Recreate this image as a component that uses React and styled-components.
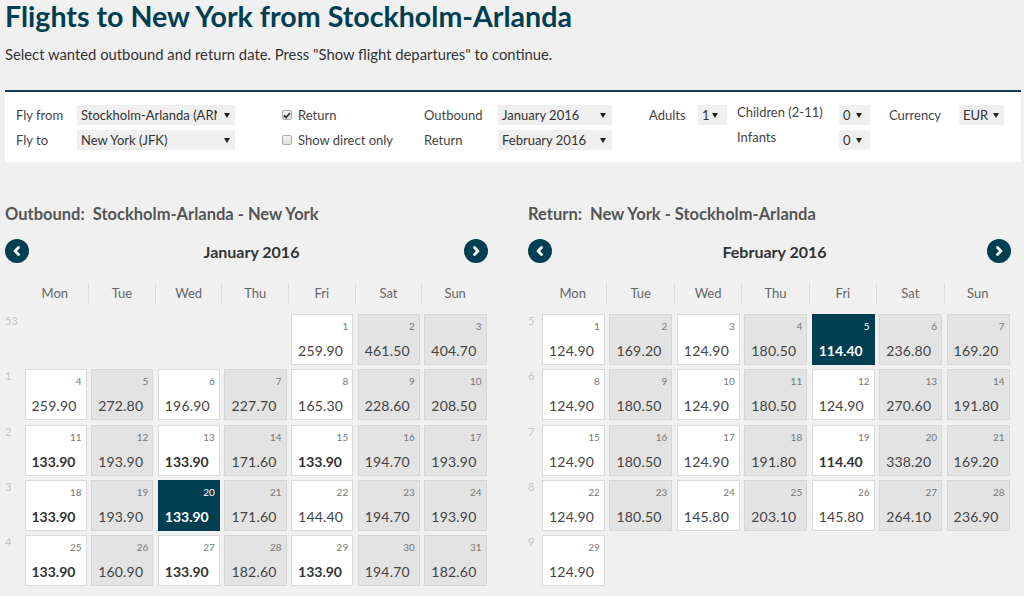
import React from 'react';
import styled, { createGlobalStyle } from 'styled-components';

const FONT = `Lato, "Open Sans", sans-serif`;
const TEAL = '#003f51';

const Global = createGlobalStyle`
  html, body { margin: 0; padding: 0; background: #f0f0f0; }
  body { font-family: ${FONT}; color: #333; }
  * { box-sizing: border-box; }
`;

const Page = styled.div`
  width: 1024px;
  padding: 0 5px;
`;

const Title = styled.h1`
  margin: 0;
  font-size: 28.6px;
  line-height: 33px;
  font-weight: 700;
  color: ${TEAL};
`;

const Subtitle = styled.p`
  margin: 11px 0 0;
  font-size: 14.8px;
  line-height: 20px;
  color: #333;
`;

const Panel = styled.div`
  margin-top: 26px;
  width: 1016px;
  background: #fff;
  border-top: 2px solid #0d3f4e;
  padding: 13px 0 12px 11px;
  display: flex;
`;

const Group = styled.div`
  display: grid;
  grid-template-columns: ${(p) => p.$cols};
  grid-auto-rows: 20px;
  row-gap: 5px;
  margin-left: ${(p) => p.$ml || 0}px;
  align-items: center;
`;

const Label = styled.span`
  font-size: 13px;
  line-height: 20px;
  color: #444;
  white-space: nowrap;
  ${(p) => p.$raise && 'position: relative; top: -3px;'}
`;

const Select = styled.div`
  position: relative;
  height: 20px;
  background: #efefef;
  font-size: 13px;
  line-height: 20px;
  color: #333;
  padding: 0 ${(p) => p.$pr || 14}px 0 4px;
`;

const SelectText = styled.div`
  white-space: nowrap;
  overflow: hidden;
`;

const Arrow = styled.span`
  position: absolute;
  right: ${(p) => p.$r || 6}px;
  top: 8px;
  border-left: 3px solid transparent;
  border-right: 3px solid transparent;
  border-top: 5px solid #222;
`;

const CheckRow = styled.label`
  display: flex;
  align-items: center;
  gap: 6px;
  font-size: 13px;
  line-height: 20px;
  color: #444;
`;

const Box = styled.span`
  width: 10px;
  height: 10px;
  border: 1px solid #a9a9a9;
  border-radius: 2px;
  background: linear-gradient(#f4f4f4, #dedede);
  display: flex;
  align-items: center;
  justify-content: center;
`;

const Calendars = styled.div`
  display: flex;
  gap: 40px;
  margin-top: 42px;
`;

const Calendar = styled.section`
  width: 483px;
`;

const CalHeading = styled.h2`
  margin: 0;
  font-size: 16.5px;
  line-height: 20px;
  font-weight: 700;
  color: #555;
  white-space: pre;
`;

const NavRow = styled.div`
  margin-top: 15px;
  display: flex;
  align-items: center;
  height: 24px;
`;

const NavBtn = styled.button`
  width: 24px;
  height: 24px;
  border-radius: 50%;
  border: none;
  padding: 0;
  background: ${TEAL};
  display: flex;
  align-items: center;
  justify-content: center;
  cursor: pointer;
`;

const MonthTitle = styled.div`
  flex: 1;
  text-align: center;
  padding-left: 10px;
  font-size: 16px;
  font-weight: 700;
  color: #333;
`;

const DayHeader = styled.div`
  display: grid;
  grid-template-columns: ${(p) => p.$week}px repeat(7, 1fr);
  height: 21px;
  margin-top: 20px;
  margin-bottom: 10px;
`;

const DayName = styled.div`
  font-size: 13px;
  line-height: 21px;
  color: #666;
  text-align: center;
  border-left: ${(p) => (p.$first ? 'none' : '1px solid #dcdcdc')};
`;

const Weeks = styled.div`
  display: grid;
  grid-template-columns: ${(p) => p.$week}px repeat(7, 1fr);
  grid-auto-rows: 51px;
  row-gap: 4.33px;
`;

const WeekNo = styled.div`
  font-size: 11px;
  line-height: 13px;
  color: #c5c5c5;
`;

const Cell = styled.div`
  margin: 0 1.5px 0 3px;
  border: 1px solid ${(p) => (p.$sel ? TEAL : p.$grey ? '#d6d6d6' : '#dadada')};
  background: ${(p) => (p.$sel ? TEAL : p.$grey ? '#e3e3e3' : '#fff')};
  padding: 5px 4px 5px 6px;
  display: flex;
  flex-direction: column;
  justify-content: space-between;
  cursor: pointer;
`;

const DayNum = styled.span`
  align-self: flex-end;
  font-size: 10px;
  line-height: 12px;
  color: ${(p) => (p.$sel ? '#fff' : '#777')};
`;

const Price = styled.span`
  font-size: 14px;
  line-height: 16px;
  font-weight: ${(p) => (p.$bold ? 700 : 400)};
  color: ${(p) => (p.$sel ? '#fff' : p.$bold ? '#333' : '#444')};
  letter-spacing: ${(p) => (p.$bold ? '0' : '0.2px')};
`;

const Chevron = ({ dir }) => (
  <svg width="10" height="12" viewBox="0 0 10 12">
    <polyline
      points={dir === 'left' ? '6.5,2.5 3,6 6.5,9.5' : '3.5,2.5 7,6 3.5,9.5'}
      fill="none"
      stroke="#fff"
      strokeWidth="2.8"
      strokeLinecap="round"
      strokeLinejoin="round"
    />
  </svg>
);

const DAYS = ['Mon', 'Tue', 'Wed', 'Thu', 'Fri', 'Sat', 'Sun'];

const months = [
  {
    heading: 'Outbound:  Stockholm-Arlanda - New York',
    title: 'January 2016',
    start: 4,
    weeks: [53, 1, 2, 3, 4],
    week: 16.5,
    sel: 20,
    prices: [
      '259.90', '461.50', '404.70',
      '259.90', '272.80', '196.90', '227.70', '165.30', '228.60', '208.50',
      '133.90', '193.90', '133.90', '171.60', '133.90', '194.70', '193.90',
      '133.90', '193.90', '133.90', '171.60', '144.40', '194.70', '193.90',
      '133.90', '160.90', '133.90', '182.60', '133.90', '194.70', '182.60',
    ],
  },
  {
    heading: 'Return:  New York - Stockholm-Arlanda',
    title: 'February 2016',
    start: 0,
    weeks: [5, 6, 7, 8, 9],
    week: 11,
    sel: 5,
    prices: [
      '124.90', '169.20', '124.90', '180.50', '114.40', '236.80', '169.20',
      '124.90', '180.50', '124.90', '180.50', '124.90', '270.60', '191.80',
      '124.90', '180.50', '124.90', '191.80', '114.40', '338.20', '169.20',
      '124.90', '180.50', '145.80', '203.10', '145.80', '264.10', '236.90',
      '124.90',
    ],
  },
];

function MonthCalendar({ m }) {
  const min = Math.min(...m.prices.map(Number));
  const items = [];
  m.weeks.forEach((w, wi) => {
    items.push(<WeekNo key={`w${wi}`}>{w}</WeekNo>);
    for (let d = 0; d < 7; d++) {
      const day = wi * 7 + d - m.start + 1;
      if (day < 1 || day > m.prices.length) {
        items.push(<div key={`e${wi}-${d}`} />);
        continue;
      }
      const price = m.prices[day - 1];
      const sel = day === m.sel;
      const grey = [1, 3, 5, 6].includes(d);
      const bold = sel || Number(price) === min;
      items.push(
        <Cell key={day} $sel={sel} $grey={grey}>
          <DayNum $sel={sel}>{day}</DayNum>
          <Price $sel={sel} $bold={bold}>{price}</Price>
        </Cell>
      );
    }
  });
  return (
    <Calendar>
      <CalHeading>{m.heading}</CalHeading>
      <NavRow>
        <NavBtn aria-label="Previous month"><Chevron dir="left" /></NavBtn>
        <MonthTitle>{m.title}</MonthTitle>
        <NavBtn aria-label="Next month"><Chevron dir="right" /></NavBtn>
      </NavRow>
      <DayHeader $week={m.week}>
        <div />
        {DAYS.map((d, i) => (
          <DayName key={d} $first={i === 0}>{d}</DayName>
        ))}
      </DayHeader>
      <Weeks $week={m.week}>{items}</Weeks>
    </Calendar>
  );
}

export default function App() {
  return (
    <Page>
      <Global />
      <Title>Flights to New York from Stockholm-Arlanda</Title>
      <Subtitle>Select wanted outbound and return date. Press "Show flight departures" to continue.</Subtitle>
      <Panel>
        <Group $cols="61px 158px">
          <Label>Fly from</Label>
          <Select $pr={18}><SelectText>Stockholm-Arlanda (ARN</SelectText><Arrow $r={5} /></Select>
          <Label>Fly to</Label>
          <Select $pr={18}><SelectText>New York (JFK)</SelectText><Arrow $r={5} /></Select>
        </Group>
        <Group $cols="142px" $ml={47}>
          <CheckRow>
            <Box>
              <svg width="8" height="7" viewBox="0 0 8 7">
                <polyline points="1,3.5 3,5.5 7,1" fill="none" stroke="#333" strokeWidth="1.8" />
              </svg>
            </Box>
            Return
          </CheckRow>
          <CheckRow>
            <Box />
            Show direct only
          </CheckRow>
        </Group>
        <Group $cols="74px 114px">
          <Label>Outbound</Label>
          <Select><SelectText>January 2016</SelectText><Arrow $r={6} /></Select>
          <Label>Return</Label>
          <Select><SelectText>February 2016</SelectText><Arrow $r={6} /></Select>
        </Group>
        <Group $cols="49px 29px" $ml={37}>
          <Label>Adults</Label>
          <Select><SelectText>1</SelectText><Arrow $r={9} /></Select>
        </Group>
        <Group $cols="102px 31px" $ml={10}>
          <Label $raise>Children (2-11)</Label>
          <Select><SelectText>0</SelectText><Arrow $r={8} /></Select>
          <Label $raise>Infants</Label>
          <Select><SelectText>0</SelectText><Arrow $r={8} /></Select>
        </Group>
        <Group $cols="70px 45px" $ml={19}>
          <Label>Currency</Label>
          <Select><SelectText>EUR</SelectText><Arrow $r={5} /></Select>
        </Group>
      </Panel>
      <Calendars>
        {months.map((m) => (
          <MonthCalendar key={m.title} m={m} />
        ))}
      </Calendars>
    </Page>
  );
}
